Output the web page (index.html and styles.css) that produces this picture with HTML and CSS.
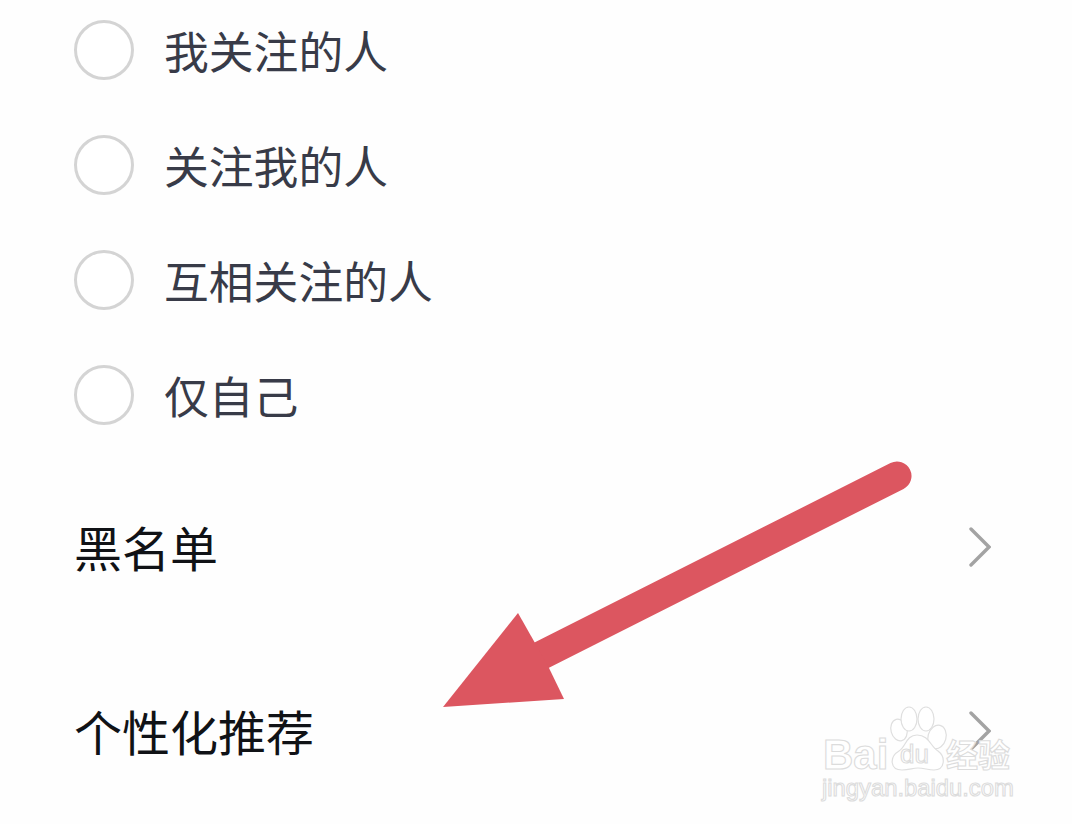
FILE: index.html
```html
<!DOCTYPE html>
<html lang="zh">
<head>
<meta charset="utf-8">
<title>隐私设置</title>
<link rel="stylesheet" href="styles.css">
</head>
<body>
<main class="page">
  <ul class="options">
    <li class="option"><span class="radio"></span><span class="option-label">我关注的人</span></li>
    <li class="option"><span class="radio"></span><span class="option-label">关注我的人</span></li>
    <li class="option"><span class="radio"></span><span class="option-label">互相关注的人</span></li>
    <li class="option"><span class="radio"></span><span class="option-label">仅自己</span></li>
  </ul>
  <div class="menu">
    <div class="menu-item"><span class="menu-label">黑名单</span>
      <svg class="chevron" viewBox="0 0 22 40"><path d="M2 2 L20 20 L2 38"/></svg></div>
    <div class="menu-item"><span class="menu-label">个性化推荐</span>
      <svg class="chevron" viewBox="0 0 22 40"><path d="M2 2 L20 20 L2 38"/></svg></div>
  </div>
  <svg class="arrow" viewBox="0 0 1072 824">
    <line class="arrow-shaft" x1="897" y1="476" x2="540" y2="656"/>
    <polygon class="arrow-head" points="443,707 518,613 535,643 549,668 564,699"/>
  </svg>
  <svg class="watermark" viewBox="0 0 1072 824">
    <g class="wm-paw">
      <ellipse cx="899" cy="730" rx="8" ry="11" transform="rotate(-15 899 730)"/>
      <ellipse cx="909" cy="719" rx="8" ry="12"/>
      <ellipse cx="926" cy="719" rx="8" ry="12"/>
      <ellipse cx="937" cy="737" rx="9" ry="12" transform="rotate(15 937 737)"/>
      <path d="M917 735 C906 735 906 747 899 751 C889 757 890 770 902 770 C910 770 912 768 918 768 C924 768 928 770 934 770 C945 770 946 757 938 751 C930 746 929 735 917 735 Z"/>
    </g>
    <text class="wm-text wm-bai" x="823" y="769">Bai</text>
    <text class="wm-text wm-du" x="900" y="763">du</text>
    <text class="wm-text wm-cn" x="946" y="767">经验</text>
    <text class="wm-text wm-url" x="822" y="796">jingyan.baidu.com</text>
  </svg>
</main>
</body>
</html>
```
FILE: styles.css
```css
* { box-sizing: border-box; }
html, body { margin: 0; padding: 0; background: #fefefe; }
body { font-family: "Noto Sans CJK SC", "Noto Sans", sans-serif; }
.page { position: relative; width: 1072px; height: 824px; overflow: hidden; padding-top: 20px; }
.options { list-style: none; margin: 0; padding: 0 0 0 74px; display: flex; flex-direction: column; gap: 55px; }
.option { display: flex; align-items: center; height: 60px; gap: 30px; }
.radio { width: 60px; height: 60px; border: 3px solid #d4d4d4; border-radius: 50%; flex: none; background: #fff; }
.option-label { font-size: 44.8px; line-height: 60px; color: #383b48; }
.menu { margin-top: 92px; padding: 0 81px 0 74px; display: flex; flex-direction: column; gap: 124px; }
.menu-item { display: flex; align-items: center; justify-content: space-between; height: 60px; }
.menu-label { font-size: 48px; line-height: 60px; color: #101216; padding-bottom: 3px; }
.chevron { width: 22px; height: 40px; fill: none; stroke: #a3a3a3; stroke-width: 3.4; stroke-linecap: round; stroke-linejoin: miter; }
.arrow, .watermark { position: absolute; left: 0; top: 0; width: 1072px; height: 824px; pointer-events: none; }
.arrow-shaft { stroke: #dc5660; stroke-width: 29; stroke-linecap: round; }
.arrow-head { fill: #dc5660; }
.wm-paw ellipse, .wm-paw path { fill: #fff; stroke: #dfdfdf; stroke-width: 1.2; }
.wm-text { fill: #fff; stroke: #dcdcdc; stroke-width: 1.1; font-family: "Liberation Sans", sans-serif; }
.wm-bai { font-size: 42px; font-weight: 700; }
.wm-du { font-size: 26px; }
.wm-cn { font-size: 32px; font-weight: 700; font-family: "Noto Sans CJK SC", sans-serif; }
.wm-url { font-size: 23.8px; }
```
